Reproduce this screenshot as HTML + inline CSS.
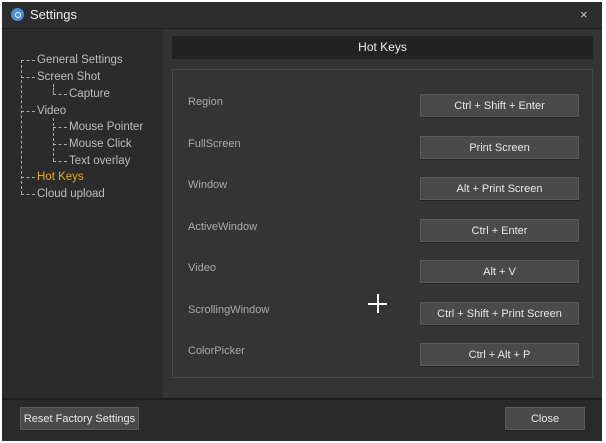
<!DOCTYPE html><html><head><style>
body{margin:0;width:606px;height:443px;background:#fff;position:relative;overflow:hidden;font-family:"Liberation Sans",sans-serif;font-size:11px;color:#bbb}
.win{position:absolute;left:2px;top:2px;width:600px;height:437px;background:#2b2b2b}
.a{position:absolute}
.title{left:0;top:0;width:600px;height:26px;background:#2d2d2d;border-bottom:1px solid #1e1e1e}
.btn{position:absolute;background:#4a4a4a;border:1px solid #5a5a5a;box-shadow:0 1px 0 #222;color:#e8e8e8;text-align:center;font-size:11px;white-space:nowrap;display:flex;align-items:center;justify-content:center}
.lab{position:absolute;left:188px;color:#aaa;font-size:11px}
.t{position:absolute;color:#bdbdbd;font-size:11.5px;white-space:nowrap;line-height:14px}
.h{position:absolute;height:0;border-top:1px dashed #aaa;width:14px}
.v{position:absolute;width:0;border-left:1px dashed #aaa}
</style></head><body>
<div class="win">
<div class="a title"></div>
<div class="a" style="left:9px;top:6px;width:13px;height:13px;border-radius:50%;background:#4a8fd8"></div>
<div class="a" style="left:12.5px;top:9.5px;width:4px;height:4px;border-radius:50%;border:1.5px solid #fff"></div>
<div class="a" style="left:28px;top:5px;color:#eee;font-size:13px">Settings</div>
<div class="a" style="left:578px;top:5px;color:#ccc;font-size:13px">×</div>
<div class="a" style="left:0;top:27px;width:161px;height:370px;background:#2b2b2b"></div>
<div class="a" style="left:161px;top:27px;width:439px;height:370px;background:#343434"></div>
<div class="a" style="left:170px;top:34px;width:421px;height:23px;background:#222;color:#eee;font-size:12px;text-align:center;line-height:23px">Hot Keys</div>
<div class="a" style="left:170px;top:67px;width:419px;height:307px;border:1px solid #484848"></div>
<div class="a" style="left:0;top:396px;width:600px;height:41px;background:#2a2a2a;border-top:2px solid #1d1d1d"></div>
</div>
<div class="v" style="left:21px;top:60px;height:134px"></div>
<div class="h" style="left:21px;top:60px"></div><div class="t" style="left:37px;top:53px">General Settings</div>
<div class="h" style="left:21px;top:77px"></div><div class="t" style="left:37px;top:70px">Screen Shot</div>
<div class="v" style="left:53px;top:84px;height:10px"></div>
<div class="h" style="left:53px;top:94px"></div><div class="t" style="left:69px;top:87px">Capture</div>
<div class="h" style="left:21px;top:111px"></div><div class="t" style="left:37px;top:104px">Video</div>
<div class="v" style="left:53px;top:118px;height:43px"></div>
<div class="h" style="left:53px;top:127px"></div><div class="t" style="left:69px;top:120px">Mouse Pointer</div>
<div class="h" style="left:53px;top:144px"></div><div class="t" style="left:69px;top:137px">Mouse Click</div>
<div class="h" style="left:53px;top:161px"></div><div class="t" style="left:69px;top:154px">Text overlay</div>
<div class="h" style="left:21px;top:177px"></div><div class="t" style="left:37px;top:170px;color:#e8a820">Hot Keys</div>
<div class="h" style="left:21px;top:194px"></div><div class="t" style="left:37px;top:187px">Cloud upload</div>
<div class="lab" style="top:96px">Region</div>
<div class="lab" style="top:138px">FullScreen</div>
<div class="lab" style="top:179px">Window</div>
<div class="lab" style="top:221px">ActiveWindow</div>
<div class="lab" style="top:262px">Video</div>
<div class="lab" style="top:304px">ScrollingWindow</div>
<div class="lab" style="top:345px">ColorPicker</div>
<div class="btn" style="left:420px;top:94px;width:157px;height:21px">Ctrl + Shift + Enter</div>
<div class="btn" style="left:420px;top:136px;width:157px;height:21px">Print Screen</div>
<div class="btn" style="left:420px;top:177px;width:157px;height:21px">Alt + Print Screen</div>
<div class="btn" style="left:420px;top:219px;width:157px;height:21px">Ctrl + Enter</div>
<div class="btn" style="left:420px;top:260px;width:157px;height:21px">Alt + V</div>
<div class="btn" style="left:420px;top:302px;width:157px;height:21px">Ctrl + Shift + Print Screen</div>
<div class="btn" style="left:420px;top:343px;width:157px;height:21px">Ctrl + Alt + P</div>
<div class="a" style="left:368px;top:303px;width:19px;height:1.5px;background:#fff"></div>
<div class="a" style="left:377px;top:294px;width:1.5px;height:19px;background:#fff"></div>
<div class="btn" style="left:20px;top:407px;width:117px;height:21px">Reset Factory Settings</div>
<div class="btn" style="left:505px;top:407px;width:78px;height:21px">Close</div>
</body></html>
